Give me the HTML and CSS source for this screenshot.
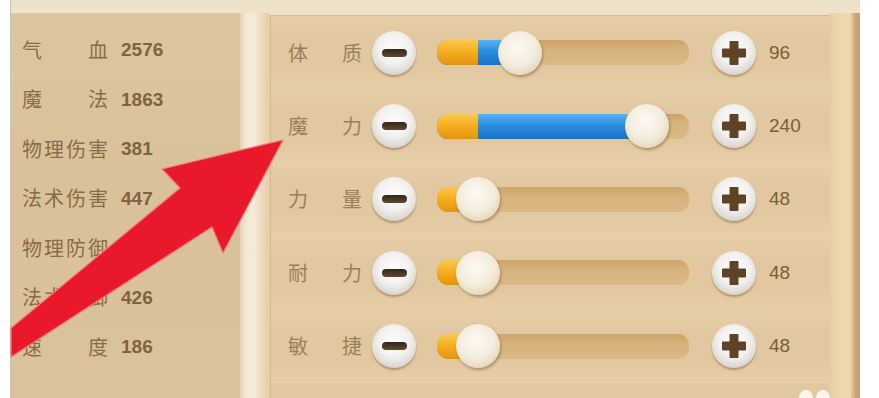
FILE: index.html
```html
<!DOCTYPE html>
<html lang="zh-CN">
<head>
<meta charset="utf-8">
<link rel="stylesheet" href="styles.css">
</head>
<body>
<div class="screen">
  <div class="frame">
    <div class="topbar"></div>
    <div class="main">
      <div class="stats">
        <div class="stat"><span class="lbl"><i>气</i><i>血</i></span><span class="num">2576</span></div>
        <div class="stat"><span class="lbl"><i>魔</i><i>法</i></span><span class="num">1863</span></div>
        <div class="stat"><span class="lbl"><i>物</i><i>理</i><i>伤</i><i>害</i></span><span class="num">381</span></div>
        <div class="stat"><span class="lbl"><i>法</i><i>术</i><i>伤</i><i>害</i></span><span class="num">447</span></div>
        <div class="stat"><span class="lbl"><i>物</i><i>理</i><i>防</i><i>御</i></span><span class="num"></span></div>
        <div class="stat"><span class="lbl"><i>法</i><i>术</i><i>防</i><i>御</i></span><span class="num">426</span></div>
        <div class="stat"><span class="lbl"><i>速</i><i>度</i></span><span class="num">186</span></div>
      </div>
      <div class="divider"></div>
      <div class="attrs">
        <div class="attr">
          <span class="albl"><i>体</i><i>质</i></span>
          <span class="btn minus"></span>
          <div class="track"><div class="fill" style="width:83px"></div><span class="knob" style="left:61px"></span></div>
          <span class="btn plus"><svg viewBox="0 0 26 26" width="26" height="26"><path d="M9.5 2h7v7.5H24v7h-7.5V24h-7v-7.5H2v-7h7.5z" fill="#5e4424" stroke="#5e4424" stroke-width="2" stroke-linejoin="round"/></svg></span>
          <span class="val">96</span>
        </div>
        <div class="attr">
          <span class="albl"><i>魔</i><i>力</i></span>
          <span class="btn minus"></span>
          <div class="track"><div class="fill" style="width:210px"></div><span class="knob" style="left:188px"></span></div>
          <span class="btn plus"><svg viewBox="0 0 26 26" width="26" height="26"><path d="M9.5 2h7v7.5H24v7h-7.5V24h-7v-7.5H2v-7h7.5z" fill="#5e4424" stroke="#5e4424" stroke-width="2" stroke-linejoin="round"/></svg></span>
          <span class="val">240</span>
        </div>
        <div class="attr">
          <span class="albl"><i>力</i><i>量</i></span>
          <span class="btn minus"></span>
          <div class="track"><div class="fill" style="width:41px"></div><span class="knob" style="left:19px"></span></div>
          <span class="btn plus"><svg viewBox="0 0 26 26" width="26" height="26"><path d="M9.5 2h7v7.5H24v7h-7.5V24h-7v-7.5H2v-7h7.5z" fill="#5e4424" stroke="#5e4424" stroke-width="2" stroke-linejoin="round"/></svg></span>
          <span class="val">48</span>
        </div>
        <div class="attr">
          <span class="albl"><i>耐</i><i>力</i></span>
          <span class="btn minus"></span>
          <div class="track"><div class="fill" style="width:41px"></div><span class="knob" style="left:19px"></span></div>
          <span class="btn plus"><svg viewBox="0 0 26 26" width="26" height="26"><path d="M9.5 2h7v7.5H24v7h-7.5V24h-7v-7.5H2v-7h7.5z" fill="#5e4424" stroke="#5e4424" stroke-width="2" stroke-linejoin="round"/></svg></span>
          <span class="val">48</span>
        </div>
        <div class="attr">
          <span class="albl"><i>敏</i><i>捷</i></span>
          <span class="btn minus"></span>
          <div class="track"><div class="fill" style="width:41px"></div><span class="knob" style="left:19px"></span></div>
          <span class="btn plus"><svg viewBox="0 0 26 26" width="26" height="26"><path d="M9.5 2h7v7.5H24v7h-7.5V24h-7v-7.5H2v-7h7.5z" fill="#5e4424" stroke="#5e4424" stroke-width="2" stroke-linejoin="round"/></svg></span>
          <span class="val">48</span>
        </div>
        <div class="foot"><span class="blob"></span><span class="blob"></span></div>
      </div>
      <div class="edge"></div>
    </div>
  </div>
  <svg class="arrow" width="879" height="398" viewBox="0 0 879 398">
    <polygon points="283,140 223,253 212,227 11,357 11,328 180,188 162,169" fill="#e9192b" stroke="#f27a80" stroke-width="1.2" stroke-linejoin="round"/>
  </svg>
</div>
</body>
</html>
```

FILE: styles.css
```css
* {
  box-sizing: border-box;
  margin: 0;
  padding: 0;
}

body {
  background: #ffffff;
  width: 879px;
  height: 398px;
  overflow: hidden;
  font-family: "Noto Sans CJK SC", sans-serif;
}

i {
  font-style: normal;
}

.screen {
  position: relative;
  width: 879px;
  height: 398px;
  padding-left: 10px;
}

.frame {
  width: 850px;
  height: 398px;
  border-left: 1px solid #c9c5bd;
  background: #eee2c9;
  display: flex;
  flex-direction: column;
}

.topbar {
  flex: none;
  height: 13px;
  background: linear-gradient(#ebdfc7, #efe3cb);
}

.main {
  flex: 1;
  display: flex;
  min-height: 0;
}

/* left stat panel */
.stats {
  flex: none;
  width: 229px;
  background: linear-gradient(#dcc6a0, #d9c29a 40%, #dac39b);
  padding: 12px 0 0 11px;
  display: flex;
  flex-direction: column;
}

.stat {
  height: 49.5px;
  display: flex;
  align-items: center;
  color: #8a6d47;
  font-size: 20px;
  line-height: 1;
}

.lbl {
  width: 86px;
  display: flex;
  justify-content: space-between;
}

.num {
  margin-left: 13px;
  font-family: "Liberation Sans", sans-serif;
  font-weight: bold;
  font-size: 19px;
  color: #7f643f;
}

.divider {
  flex: none;
  width: 30px;
  background: linear-gradient(90deg, #e4d0ad 0, #eee0c6 3px, #f5ebd9 9px, #f4e8d6 15px, #efdcc7 20px, #e9d4b1 25px, #e4cca5 30px);
}

/* right attribute panel */
.attrs {
  flex: none;
  width: 560px;
  margin-top: 2px;
  background: #e2c8a0;
  border-top: 1px solid #d6bc93;
  border-left: 1px solid #d5ba90;
  overflow: hidden;
}

.attr {
  height: 73.4px;
  padding-left: 17px;
  display: flex;
  align-items: center;
  background: linear-gradient(rgba(255, 246, 226, 0.14), rgba(255, 246, 226, 0) 30%, rgba(255, 246, 226, 0) 70%, rgba(255, 246, 226, 0.14));
}

.albl {
  flex: none;
  width: 74px;
  display: flex;
  justify-content: space-between;
  font-size: 20px;
  line-height: 1;
  color: #9c7f59;
}

.btn {
  flex: none;
  width: 44px;
  height: 44px;
  border-radius: 50%;
  display: flex;
  align-items: center;
  justify-content: center;
  background: radial-gradient(circle at 50% 40%, #fdfdfd 0, #f2f1ef 45%, #dedbd6 70%, #c6bfb4 86%, #a99a84 100%);
  box-shadow: 0 2px 2px rgba(115, 82, 40, 0.45);
}

.minus {
  margin-left: 10px;
}

.minus::before {
  content: "";
  width: 25px;
  height: 8px;
  border-radius: 4px;
  background: linear-gradient(#33261a, #5d4a33);
}

.plus {
  margin-left: 23px;
}

.track {
  flex: none;
  position: relative;
  margin-left: 21px;
  width: 252px;
  height: 25px;
  border-radius: 11px;
  background: linear-gradient(#cca46a, #d7b37c 40%, #dbb985);
}

.fill {
  height: 100%;
  border-radius: 11px 0 0 11px;
  background: linear-gradient(#5ab3f2, #2a8ee0 45%, #1b73c6);
  overflow: hidden;
}

.fill::before {
  content: "";
  display: block;
  width: 41px;
  max-width: 100%;
  height: 100%;
  background: linear-gradient(#fbc94c, #f4ad1e 50%, #e39312);
}

.knob {
  position: absolute;
  top: 50%;
  width: 44px;
  height: 44px;
  margin-top: -22px;
  border-radius: 50%;
  background: radial-gradient(circle at 45% 38%, #fcfaf4 0, #f3ecdd 50%, #e6d9bf 74%, #c9b28c 91%, #a3825a 100%);
  box-shadow: 1px 2px 3px rgba(100, 70, 30, 0.45);
}

.val {
  margin-left: 13px;
  font-family: "Liberation Sans", sans-serif;
  font-size: 19px;
  color: #7b5e38;
}

.foot {
  display: flex;
  justify-content: flex-end;
  gap: 3px;
  padding-top: 7px;
}

.blob {
  width: 14px;
  height: 16px;
  border-radius: 50%;
  background: #fbf6ec;
}

.edge {
  flex: none;
  width: 30px;
  background: linear-gradient(90deg, #e5cba1 0, #edd5aa 4px, #efd8ad 20px, #e2c394 22px, #caa778 25px, #bf9e70 29px, #b7b0a2 30px);
}

.arrow {
  position: absolute;
  left: 0;
  top: 0;
  pointer-events: none;
}
```
